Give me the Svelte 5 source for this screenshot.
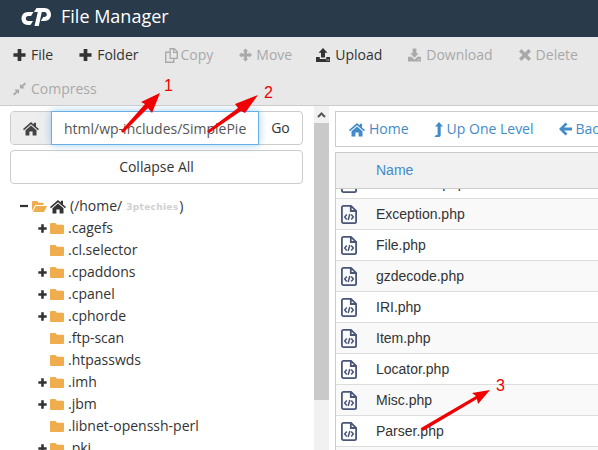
<script>
  const icons = {
    plus: ['0 0 14 14', 'M5 .5h4v4.500h4.500v4H9v4.500H5V9H.5V5H5z'],
    copy: ['0 0 13 15', 'M4.500 0H9.500L13 3.500V11H9.500V15H0V3.500H4.500zM5.800 1.400V9.700H11.600V4.900H8.100V1.400zM1.400 4.900V13.600H8.100V11H4.500V4.900zM9.400 1.500V3.700H11.500z'],
    move: ['0 0 14 14', 'M7 0L10 3H8.500V5.500H11V4L14 7L11 10V8.500H8.500V11H10L7 14L4 11H5.500V8.500H3V10L0 7L3 4V5.500H5.500V3H4z'],
    upload: ['0 0 14 14', 'M7 0L11.500 4.800H9V9.500H5V4.800H2.500zM0 9H3.800V11H10.200V9H14V14H0zM10.500 11.500v1h1v-1zM12.200 11.500v1h1v-1z'],
    download: ['0 0 14 14', 'M5 0H9V5H11.500L7 10L2.500 5H5zM0 9H3.800L7 12L10.200 9H14V14H0zM10.500 11.500v1h1v-1zM12.200 11.500v1h1v-1z'],
    times: ['0 0 12 14', 'M2.500 1L6 4.500L9.500 1L12 3.500L8.500 7L12 10.500L9.500 13L6 9.500L2.500 13L0 10.500L3.500 7L0 3.500z'],
    compress: ['0 0 14 14', 'M12.500 0L14 1.500L10.800 4.700L12.500 6.500H7.500V1.500L9.200 3.300zM1.500 7.500H6.500V12.500L4.800 10.700L1.500 14L0 12.500L3.300 9.300z'],
    home: ['0 0 16 15', 'M8 1L10.800 3.500V1.800H13V5.400L16 8.100L15 9.300L8 3.200L1 9.300L0 8.100zM8 4.600L13.500 9.300V14.500H9.600V10.500H6.400V14.500H2.500V9.300z'],
    up: ['0 0 9 15', 'M5 0L9 4.500H6.700V13C6.700 14.200 6 15 4.800 15H.5L2 13H3.600V4.500H1z'],
    back: ['0 0 13 14', 'M6.500 .5L8.500 2.500L5 5.500H13V8.500H5L8.500 11.500L6.500 13.500L0 7z'],
    minus: ['0 0 8 8', 'M0 2.900h8v2.200H0z'],
    folder: ['0 0 14 13', 'M1 1H5.500L7 2.800H13A1 1 0 0 1 14 3.800V11A1 1 0 0 1 13 12H1A1 1 0 0 1 0 11V2A1 1 0 0 1 1 1z'],
    folderOpen: ['0 0 15 13', 'M1 1H5L6.500 2.800H11.500V5H3.200L0 11V2A1 1 0 0 1 1 1zM3.800 6H15L12 12H.8z']
  };
  const actions = [
    { label: 'File', icon: 'plus', w: 13, h: 14 },
    { label: 'Folder', icon: 'plus', w: 13, h: 14 },
    { label: 'Copy', icon: 'copy', w: 13, h: 15, off: true, cls: 'pull2' },
    { label: 'Move', icon: 'move', w: 13, h: 14, off: true, cls: 'pull1 tight' },
    { label: 'Upload', icon: 'upload', w: 14, h: 14 },
    { label: 'Download', icon: 'download', w: 13, h: 14, off: true },
    { label: 'Delete', icon: 'times', w: 12, h: 14, off: true },
    { label: 'Compress', icon: 'compress', w: 13, h: 14, off: true }
  ];
  const tree = [
    ['.cagefs', true], ['.cl.selector', false], ['.cpaddons', true], ['.cpanel', true],
    ['.cphorde', true], ['.ftp-scan', false], ['.htpasswds', false], ['.imh', true],
    ['.jbm', true], ['.libnet-openssh-perl', false], ['.pki', true]
  ];
  const files = ['Enclosure.php', 'Exception.php', 'File.php', 'gzdecode.php', 'IRI.php', 'Item.php', 'Locator.php', 'Misc.php', 'Parser.php', 'Sanitize.php'];
</script>

{#snippet icon(name, w, h)}
  <svg class="ic" width={w} height={h} viewBox={icons[name][0]} aria-hidden="true"><path d={icons[name][1]} fill="currentColor" fill-rule="evenodd" /></svg>
{/snippet}

<div class="page">
  <header class="top">
    <svg class="logo" width="30" height="18" viewBox="0 0 30 18" aria-hidden="true">
      <path d="M12.500 4H7C3.200 4 .5 6.800 .5 10.500S3.200 17 7 17H9.500L12 13H7.300C5.800 13 4.800 12 4.800 10.500S5.800 8 7.300 8H10z" fill="#fff" />
      <path d="M15.500 0H23.500C27.300 0 30 2.800 30 6.500S27.300 13 23.500 13H19.800L22.300 9H23.300C24.800 9 25.800 8 25.800 6.500S24.800 4 23.300 4H20.800L17.800 18H13.500L16.800 4H13z" fill="#fff" />
    </svg>
    <span class="title">File Manager</span>
  </header>

  <nav class="toolbar">
    {#each actions as a}
      <div class="action {a.cls ?? ''}" class:off={a.off}>{@render icon(a.icon, a.w, a.h)}<span>{a.label}</span></div>
    {/each}
  </nav>

  <main class="main">
    <aside class="left">
      <div class="pathgroup">
        <span class="addon">{@render icon('home', 16, 15)}</span>
        <input class="path" value="html/wp-includes/SimplePie" readonly />
        <span class="go">Go</span>
      </div>
      <div class="collapse">Collapse All</div>
      <ul class="tree">
        <li class="root">
          {@render icon('minus', 8, 8)}
          <span class="yellow">{@render icon('folderOpen', 15, 13)}</span>
          {@render icon('home', 16, 15)}
          <span class="rootlabel">(/home/<b class="mask">3ptechies</b>)</span>
        </li>
        {#each tree as [name, more]}
          <li class="node">
            <span class="toggle">{#if more}{@render icon('plus', 9, 9)}{/if}</span>
            <span class="yellow">{@render icon('folder', 14, 13)}</span>
            <span>{name}</span>
          </li>
        {/each}
      </ul>
    </aside>

    <div class="scroll">
      <div class="sbtn"><svg width="9" height="6" viewBox="0 0 9 6" aria-hidden="true"><path d="M1 5L4.500 1.500L8 5" fill="none" stroke="#555" stroke-width="2" /></svg></div>
      <div class="thumb"></div>
    </div>

    <section class="right">
      <div class="navbox">
        <span class="link">{@render icon('home', 16, 15)}Home</span>
        <span class="link">{@render icon('up', 9, 15)}Up One Level</span>
        <span class="link">{@render icon('back', 13, 14)}Back</span>
      </div>
      <div class="table">
        <div class="thead">Name</div>
        <div class="tbody">
          {#each files as f}
            <div class="row">
              <svg class="fileic" width="16" height="19" viewBox="0 0 16 19" aria-hidden="true">
                <path d="M2.500 .9H10L15.100 5.800V16.500A1.600 1.600 0 0 1 13.500 18.100H2.500A1.600 1.600 0 0 1 .9 16.500V2.500A1.600 1.600 0 0 1 2.500 .9zM9.800 1V6H15" fill="none" stroke="#4a5678" stroke-width="1.800" />
                <path d="M5.800 9.500L3.700 12L5.800 14.500M10.200 9.500L12.300 12L10.200 14.500M8.800 9L7.200 15" fill="none" stroke="#4a5678" stroke-width="1.500" />
              </svg>
              <span>{f}</span>
            </div>
          {/each}
        </div>
      </div>
    </section>
  </main>

  <svg class="arrows" width="598" height="450" viewBox="0 0 598 450" aria-hidden="true">
    <g fill="#f00000">
      <path d="M121 131L145 104L141 102L160 93L152 113L148 108L123 133z" />
      <path d="M207 131L238 108L235 104L258 95L245 113L241 111L209 133z" />
      <path d="M421 428L476 396L472 393L490 390L478 404L477 399L423 431z" />
    </g>
  </svg>
  <span class="num n1">1</span>
  <span class="num n2">2</span>
  <span class="num n3">3</span>
</div>

<style>
  :global(body) { margin: 0; }
  .page {
    position: relative;
    width: 598px;
    height: 450px;
    overflow: hidden;
    background: #fff;
    color: #333;
    font: 14px/20px "Open Sans", sans-serif;
  }
  .ic { display: block; flex: none; }
  .top {
    height: 37px;
    background: #293a4a;
    display: flex;
    align-items: center;
    padding-left: 21px;
    box-sizing: border-box;
  }
  .logo { margin-right: 10px; margin-top: -3px; }
  .title { color: #fff; font-size: 18px; padding-bottom: 5px; }
  .toolbar {
    height: 69px;
    box-sizing: border-box;
    background: #e8e8e8;
    border-bottom: 1px solid #ccc;
    display: flex;
    flex-wrap: wrap;
    align-content: flex-start;
    column-gap: 2px;
    padding: 1px 0 0 1px;
  }
  .action {
    height: 34px;
    display: flex;
    align-items: center;
    gap: 5px;
    padding: 0 12px;
    color: #333;
  }
  .action.pull1 { gap: 4px; }
  .action.pull2 { gap: 3px; }
  .action.tight { padding-right: 10px; }
  .action.off { color: #a9a9a9; }
  .main { display: flex; height: 344px; }
  .left {
    width: 314px;
    flex: none;
    box-sizing: border-box;
    padding: 5px 11px 0 10px;
    overflow: hidden;
  }
  .pathgroup {
    display: flex;
    height: 34px;
    box-sizing: border-box;
    border: 1px solid #ccc;
    border-radius: 4px;
  }
  .addon {
    width: 40px;
    background: #eee;
    border-radius: 3px 0 0 3px;
    display: flex;
    align-items: center;
    justify-content: center;
    color: #444;
  }
  .path {
    width: 208px;
    box-sizing: border-box;
    height: 34px;
    margin: -1px 0;
    padding: 0 12px;
    border: 1px solid #66afe9;
    box-shadow: 0 0 8px rgba(102, 175, 233, .6);
    outline: none;
    color: #555;
    font: inherit;
    position: relative;
  }
  .go { flex: 1; text-align: center; line-height: 32px; }
  .collapse {
    margin-top: 5px;
    height: 34px;
    box-sizing: border-box;
    border: 1px solid #ccc;
    border-radius: 4px;
    text-align: center;
    line-height: 32px;
  }
  .tree { list-style: none; margin: 11px 0 0; padding: 0; }
  .tree li { height: 22px; display: flex; align-items: center; white-space: nowrap; }
  .root { padding-left: 10px; gap: 4px; }
  .root .yellow { margin: 0 -1px 0 0; }
  .node { padding-left: 28px; }
  .mask {
    font: bold 9px "DejaVu Sans", sans-serif;
    letter-spacing: .3px;
    color: #d0d0d0;
    margin: 0 1px 0 4px;
    vertical-align: 1px;
  }
  .toggle { width: 12px; flex: none; }
  .yellow { color: #f0ad4e; margin-right: 4px; flex: none; }
  .scroll { width: 15px; flex: none; background: #f1f1f1; }
  .sbtn { height: 17px; display: flex; align-items: center; justify-content: center; }
  .thumb { height: 277px; background: #c9c9c9; }
  .right { flex: 1; min-width: 0; overflow: hidden; padding: 5px 0 0 6px; }
  .navbox {
    width: 400px;
    height: 36px;
    box-sizing: border-box;
    border: 1px solid #ccc;
    display: flex;
    align-items: center;
    gap: 25px;
    padding-left: 13px;
  }
  .link { display: flex; align-items: center; gap: 4px; color: #428bca; white-space: nowrap; }
  .table {
    width: 400px;
    margin-top: 5px;
    border-left: 1px solid #ccc;
    border-top: 1px solid #ccc;
    font-family: "Liberation Sans", sans-serif;
  }
  .thead {
    height: 35px;
    line-height: 35px;
    background: #f1f1f1;
    border-bottom: 1px solid #ccc;
    padding-left: 40px;
    color: #428bca;
    position: relative;
    z-index: 1;
  }
  .tbody { height: 262px; overflow: hidden; }
  .row {
    height: 30px;
    border-bottom: 1px solid #ddd;
    display: flex;
    align-items: center;
    padding-left: 5px;
    gap: 19px;
    color: #333;
  }
  .row:first-child { margin-top: -21px; }
  .row:nth-child(even) { background: #f9f9f9; }
  .fileic { flex: none; }
  .arrows { position: absolute; left: 0; top: 0; pointer-events: none; }
  .num {
    position: absolute;
    color: #f00000;
    font: 16px/16px "Liberation Sans", sans-serif;
  }
  .n1 { left: 164px; top: 78px; }
  .n2 { left: 264px; top: 85px; }
  .n3 { left: 496px; top: 378px; }
</style>
